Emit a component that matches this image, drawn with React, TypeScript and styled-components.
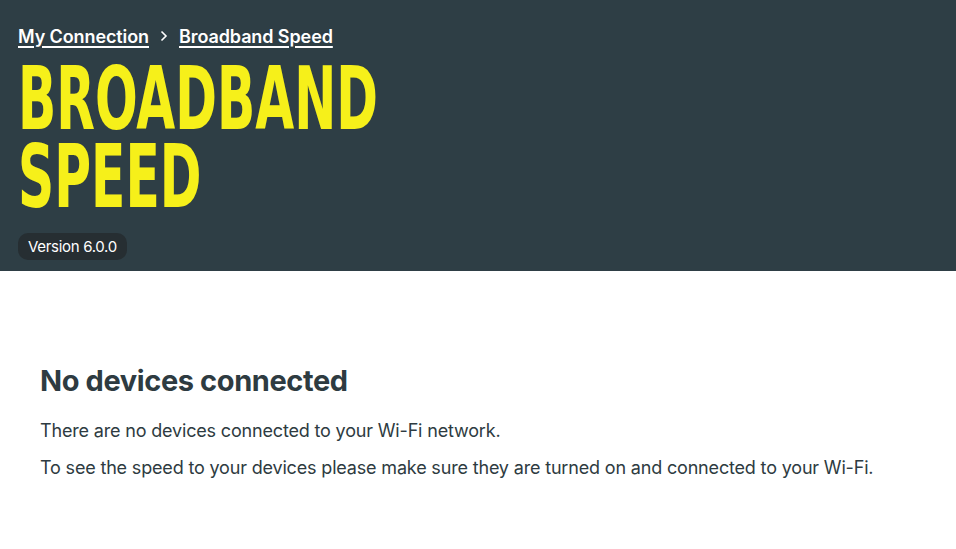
import React from "react";
import styled, { createGlobalStyle } from "styled-components";

const GlobalStyle = createGlobalStyle`
  html, body { margin: 0; padding: 0; background: #ffffff; }
  body { font-family: Inter, "Noto Sans", sans-serif; }
`;

const Page = styled.div`
  width: 956px;
  min-height: 549px;
  background: #ffffff;
`;

const Header = styled.header`
  background: #2e3e45;
  padding: 24px 18px 11px;
  display: flex;
  flex-direction: column;
  align-items: flex-start;
`;

const Crumbs = styled.nav`
  display: flex;
  align-items: center;
  gap: 9px;
  height: 24px;
`;

const CrumbLink = styled.a`
  color: #ffffff;
  font-family: Inter, sans-serif;
  font-size: 18px;
  font-weight: 600;
  letter-spacing: -0.1px;
  text-decoration: underline;
  text-underline-offset: 3px;
  text-decoration-thickness: 1.5px;
`;

const Chevron = styled.span`
  display: flex;
  width: 12px;
  justify-content: center;
`;

const Title = styled.h1`
  margin: 12px 0 0;
  font-family: "DejaVu Sans Condensed", "DejaVu Sans", sans-serif;
  font-stretch: condensed;
  font-weight: 700;
  font-size: 88px;
  line-height: 78px;
  color: #f6f01a;
  text-transform: uppercase;
  transform: scaleX(0.635);
  transform-origin: left center;
`;

const Pill = styled.span`
  margin-top: 17px;
  background: #262e32;
  color: #ffffff;
  border-radius: 10px;
  padding: 0 10px;
  height: 27px;
  display: inline-flex;
  align-items: center;
  font-family: Inter, sans-serif;
  font-size: 15px;
  letter-spacing: -0.3px;
`;

const Content = styled.main`
  padding: 92px 40px 40px;
  color: #2e3b41;
`;

const Heading = styled.h2`
  margin: 0 0 20px;
  font-family: Inter, sans-serif;
  font-size: 29px;
  font-weight: 700;
  letter-spacing: -0.4px;
  line-height: 36px;
`;

const Para = styled.p`
  margin: 0 0 13px;
  font-family: Inter, sans-serif;
  font-size: 18px;
  line-height: 24px;
  letter-spacing: -0.17px;
`;

export default function App() {
  return (
    <Page>
      <GlobalStyle />
      <Header>
        <Crumbs>
          <CrumbLink href="#">My Connection</CrumbLink>
          <Chevron>
            <svg width="8" height="12" viewBox="0 0 8 12" fill="none">
              <path d="M1.5 1.5 6 6l-4.5 4.5" stroke="#ffffff" strokeWidth="1.6" />
            </svg>
          </Chevron>
          <CrumbLink href="#">Broadband Speed</CrumbLink>
        </Crumbs>
        <Title>
          Broadband
          <br />
          Speed
        </Title>
        <Pill>Version 6.0.0</Pill>
      </Header>
      <Content>
        <Heading>No devices connected</Heading>
        <Para>There are no devices connected to your Wi-Fi network.</Para>
        <Para>To see the speed to your devices please make sure they are turned on and connected to your Wi-Fi.</Para>
      </Content>
    </Page>
  );
}
